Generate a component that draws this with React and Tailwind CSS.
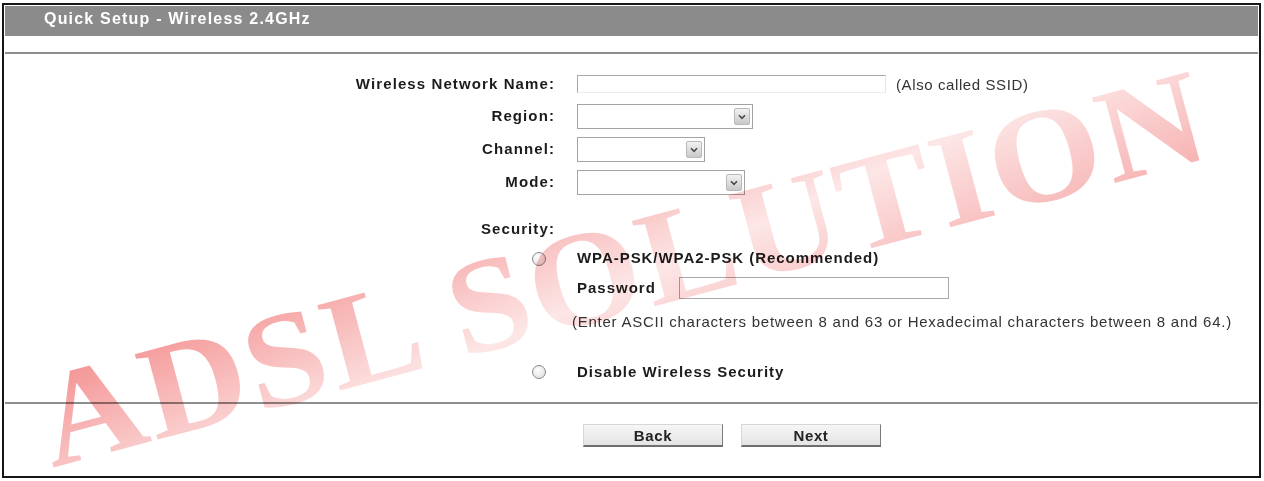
import React from 'react'

function Arrow() {
  return (
    <span className="absolute right-[2px] top-[3px] w-[16px] h-[17px] rounded-[2px] bg-[linear-gradient(#f2f2f2,#c9c9c9)] border border-[#b9b9b9] flex items-center justify-center">
      <svg width="8" height="6" viewBox="0 0 8 6">
        <path d="M1 1.2 L4 4.4 L7 1.2" fill="none" stroke="#4a4a4a" strokeWidth="1.6" />
      </svg>
    </span>
  )
}

function Select({ w }) {
  return (
    <div className={`relative h-[25px] bg-white border border-[#a3a3a3] ${w}`}>
      <Arrow />
    </div>
  )
}

function Radio() {
  return (
    <span className="inline-block w-[14px] h-[14px] rounded-full border border-[#8a8a8a] bg-[radial-gradient(circle_at_40%_35%,#ffffff,#d9d9d9)]" />
  )
}

function Row({ label, children, className = '' }) {
  return (
    <div className={`flex items-center ${className}`}>
      <div className="w-[550px] text-right font-bold text-[15px] tracking-[1.1px] text-[#1c1c1c]">{label}</div>
      <div className="ml-[22px] flex items-center h-full">{children}</div>
    </div>
  )
}

export default function App() {
  return (
    <div className="relative w-[1264px] h-[481px] bg-white pt-[3px] pl-[2px] pr-[3px] pb-[3px] overflow-hidden font-['Liberation_Sans',Arial,sans-serif]">
      <div className="h-full border-2 border-[#161616] p-[1px] flex flex-col">
        <div className="h-[30px] bg-[#8b8b8b] pl-[39px] pb-[4px] flex items-center">
          <span className="text-white font-bold text-[16px] tracking-[1.2px]">Quick Setup - Wireless 2.4GHz</span>
        </div>
        <div className="mt-[16px] h-[2px] bg-[#8e8e8e]" />

        <Row label="Wireless Network Name:" className="mt-[21px] h-[18px]">
          <div className="w-[309px] h-[18px] border-t border-l border-[#a8a8a8] border-r border-r-[#e6e6e6] border-b border-b-[#ececec]" />
          <span className="ml-[10px] mt-[3px] text-[15px] text-[#333] tracking-[0.6px]">(Also called SSID)</span>
        </Row>
        <Row label="Region:" className="mt-[11px] h-[25px]">
          <Select w="w-[176px]" />
        </Row>
        <Row label="Channel:" className="mt-[8px] h-[25px]">
          <Select w="w-[128px]" />
        </Row>
        <Row label="Mode:" className="mt-[8px] h-[25px]">
          <Select w="w-[168px]" />
        </Row>

        <Row label="Security:" className="mt-[24px] h-[20px]" />

        <div className="mt-[9px] h-[20px] flex items-center">
          <div className="w-[550px] flex justify-end pr-[9px] pt-[2px]"><Radio /></div>
          <span className="ml-[22px] font-bold text-[15px] tracking-[0.95px] text-[#1c1c1c]">WPA-PSK/WPA2-PSK (Recommended)</span>
        </div>
        <div className="mt-[9px] h-[22px] flex items-center">
          <div className="w-[550px]" />
          <span className="ml-[22px] w-[102px] font-bold text-[15px] tracking-[1px] text-[#1c1c1c]">Password</span>
          <div className="w-[270px] h-[22px] border border-[#a8a8a8] bg-white" />
        </div>
        <div className="mt-[13px] h-[20px] flex items-center">
          <div className="w-[550px]" />
          <span className="ml-[17px] text-[15px] text-[#333] tracking-[0.75px] whitespace-nowrap">(Enter ASCII characters between 8 and 63 or Hexadecimal characters between 8 and 64.)</span>
        </div>
        <div className="mt-[30px] h-[20px] flex items-center">
          <div className="w-[550px] flex justify-end pr-[9px]"><Radio /></div>
          <span className="ml-[22px] font-bold text-[15px] tracking-[1px] text-[#1c1c1c]">Disable Wireless Security</span>
        </div>

        <div className="mt-[20px] h-[2px] bg-[#8e8e8e]" />

        <div className="mt-[20px] flex gap-[18px] pl-[578px]">
          <button className="w-[140px] h-[23px] bg-[linear-gradient(#f6f6f6,#e4e4e4)] border border-[#d6d6d6] border-r-[#7a7a7a] border-b-[#6e6e6e] border-b-2 font-bold text-[15px] tracking-[0.6px] text-[#222]">Back</button>
          <button className="w-[140px] h-[23px] bg-[linear-gradient(#f6f6f6,#e4e4e4)] border border-[#d6d6d6] border-r-[#7a7a7a] border-b-[#6e6e6e] border-b-2 font-bold text-[15px] tracking-[0.6px] text-[#222]">Next</button>
        </div>
      </div>

      <div className="pointer-events-none absolute left-[622px] top-[268px] -translate-x-1/2 -translate-y-1/2 -rotate-[15deg] mix-blend-multiply">
        <span className="block whitespace-nowrap font-['Liberation_Serif',serif] font-bold text-[135px] leading-none tracking-[2px] scale-x-[1.07] text-transparent bg-clip-text bg-[linear-gradient(170deg,#ec4545_10%,#fbd2d2_55%,#f07070_95%)] opacity-55">ADSL SOLUTION</span>
      </div>
    </div>
  )
}
